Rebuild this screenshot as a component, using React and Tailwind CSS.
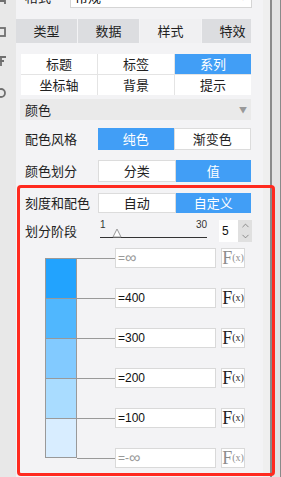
import { ChevronUp, ChevronDown } from 'lucide-react';

const cjk = { fontFamily: '"Noto Sans CJK SC", "Noto Sans", sans-serif' };

function Seg({ items, active }) {
  return (
    <div className="flex h-full w-[153px]">
      {items.map((t, i) => (
        <div
          key={t}
          className={
            i === active
              ? 'flex flex-1 items-center justify-center bg-[#419ef6] text-white'
              : 'flex flex-1 items-center justify-center border border-[#dcdcdc] bg-white text-[#222]'
          }
        >
          {t}
        </div>
      ))}
    </div>
  );
}

function Fx({ dim }) {
  return (
    <div className="flex h-[20px] w-[24px] items-center justify-center border border-[#d9d9d9] bg-white" style={{ fontFamily: '"Liberation Serif", serif' }}>
      <span className={dim ? 'text-[18px] leading-none text-[#8c8c8c]' : 'text-[18px] leading-none text-[#222]'}>F</span>
      <span className={dim ? 'text-[10px] leading-none text-[#8c8c8c]' : 'text-[10px] leading-none text-[#222]'}>(x)</span>
    </div>
  );
}

export default function App() {
  const segs = ['#22a3fe', '#50b7fe', '#82caff', '#a9dcff', '#d8edff'];
  const vals = [
    { v: '=', inf: '∞', dim: true },
    { v: '=400' },
    { v: '=300' },
    { v: '=200' },
    { v: '=100' },
    { v: '=-', inf: '∞', dim: true },
  ];

  return (
    <div className="relative flex h-[477px] w-[281px] overflow-hidden bg-[#f3f3f5] text-[13px]" style={cjk}>
      {/* left tool strip, cut off */}
      <div className="h-full w-[16px] bg-[#e8e8e8]">
        <svg width="16" height="110" viewBox="0 0 16 110" fill="none" stroke="#6f6f6f" strokeWidth="1.8">
          <path d="M-2 1 H5 V4" />
          <rect x="-3" y="28" width="8" height="8" />
          <path d="M-2 57 H6 M1 57 V66 M-2 61 H4" />
          <circle cx="1" cy="93" r="4" />
        </svg>
      </div>

      {/* main panel */}
      <div className="flex w-[247px] flex-col">
        <div className="-mt-[14px] flex h-[22px] items-center pl-[9px] pr-[11px]">
          <span className="w-[45px] text-[#222]">格式</span>
          <div className="flex h-full flex-1 items-center justify-between border border-[#d5d5d5] bg-white px-[4px]">
            <span>常规</span>
            <span className="text-[8px] text-[#888]">▼</span>
          </div>
        </div>

        <div className="mt-[11px] flex h-[24px] w-[235px] gap-px overflow-hidden">
          {['类型', '数据', '样式', '特效'].map((t, i) => (
            <div
              key={t}
              className={
                i === 2
                  ? 'flex w-[61px] shrink-0 items-center justify-center bg-[#f0f0f2] text-[#222]'
                  : 'flex w-[61px] shrink-0 items-center justify-center bg-[#dcdde0] text-[#222]'
              }
            >
              {t}
            </div>
          ))}
        </div>

        <div className="ml-[5px] mt-[11px] grid w-[230px] grid-cols-3 gap-px bg-[#e4e4e4]">
          {['标题', '标签', '系列', '坐标轴', '背景', '提示'].map((t, i) => (
            <div
              key={t}
              className={
                i === 2
                  ? 'flex h-[20px] items-center justify-center bg-[#419ef6] text-white'
                  : 'flex h-[20px] items-center justify-center bg-white text-[#222]'
              }
            >
              {t}
            </div>
          ))}
        </div>

        <div className="ml-[4px] mt-[4px] flex h-[21px] w-[231px] items-center justify-between bg-[#eaeaea] pl-[5px] pr-[4px]">
          <span className="text-[#222]">颜色</span>
          <span className="text-[8px] text-[#999]">▼</span>
        </div>

        <div className="ml-[5px] mt-[8px] flex h-[22px] items-center">
          <span className="w-[77px] pl-[4px] text-[#222]">配色风格</span>
          <Seg items={['纯色', '渐变色']} active={0} />
        </div>

        <div className="ml-[5px] mt-[10px] flex h-[22px] items-center">
          <span className="w-[77px] pl-[4px] text-[#222]">颜色划分</span>
          <Seg items={['分类', '值']} active={1} />
        </div>

        <div className="ml-[5px] mt-[11px] flex h-[20px] items-center">
          <span className="w-[77px] pl-[4px] text-[#222]">刻度和配色</span>
          <Seg items={['自动', '自定义']} active={1} />
        </div>

        <div className="ml-[5px] mt-[7px] flex h-[22px] items-center">
          <span className="w-[77px] pl-[4px] text-[#222]">划分阶段</span>
          <div className="flex h-full w-[109px] flex-col pl-[2px]" style={{ fontFamily: '"Liberation Sans", sans-serif' }}>
            <div className="flex justify-between text-[10px] leading-[10px] text-[#333]">
              <span>1</span>
              <span>30</span>
            </div>
            <div className="relative mt-[7px] h-px w-[107px] bg-[#333]">
              <svg className="absolute -top-[9px] left-[12px]" width="10" height="10" viewBox="0 0 10 10">
                <path d="M5 1 L9 9 H1 Z" fill="white" stroke="#999" />
              </svg>
            </div>
          </div>
          <div className="ml-[12px] flex h-full">
            <div className="flex w-[19px] items-center bg-white pl-[3px] text-[12px] text-[#111]" style={{ fontFamily: '"Liberation Sans", sans-serif' }}>5</div>
            <div className="flex w-[14px] flex-col items-center justify-center bg-[#e0e0e0] text-[#666]">
              <ChevronUp size={11} strokeWidth={1.5} />
              <ChevronDown size={11} strokeWidth={1.5} />
            </div>
          </div>
        </div>

        <div className="ml-[29px] mt-[6px] flex items-start">
          <div className="mt-[10px] flex w-[32px] flex-col border border-[#999]">
            {segs.map((c, i) => (
              <div
                key={c}
                className={i < 4 ? 'h-[40px] border-b border-[#999]' : 'h-[38px]'}
                style={{ backgroundColor: c }}
              />
            ))}
          </div>
          <div className="flex flex-col gap-[20px]">
            {vals.map((r) => (
              <div key={r.v} className="flex h-[20px] items-center">
                <div className="h-px w-[38px] bg-[#999]" />
                <div
                  className={
                    r.dim
                      ? 'flex h-full w-[101px] items-center border border-[#d9d9d9] bg-white pl-[2px] text-[12px] text-[#999]'
                      : 'flex h-full w-[101px] items-center border border-[#d9d9d9] bg-white pl-[2px] text-[12px] text-[#111]'
                  }
                  style={{ fontFamily: '"Liberation Sans", sans-serif' }}
                >
                  {r.v}
                  {r.inf && <span className="text-[16px] leading-none">{r.inf}</span>}
                </div>
                <div className="ml-[5px]">
                  <Fx dim={r.dim} />
                </div>
              </div>
            ))}
          </div>
        </div>
      </div>

      {/* right scroll edge */}
      <div className="flex h-full flex-1">
        <div className="w-[7px] bg-[#efefef]" />
        <div className="w-[2px] bg-[#8a8a8a]" />
        <div className="w-[8px] bg-[#e3e3e3]" />
        <div className="w-px bg-[#8a8a8a]" />
      </div>

      {/* red annotation frame */}
      <div className="pointer-events-none absolute left-[17px] top-[185px] h-[291px] w-[258px] rounded-[4px] border-[3px] border-[#ff2a1f]" />
    </div>
  );
}
